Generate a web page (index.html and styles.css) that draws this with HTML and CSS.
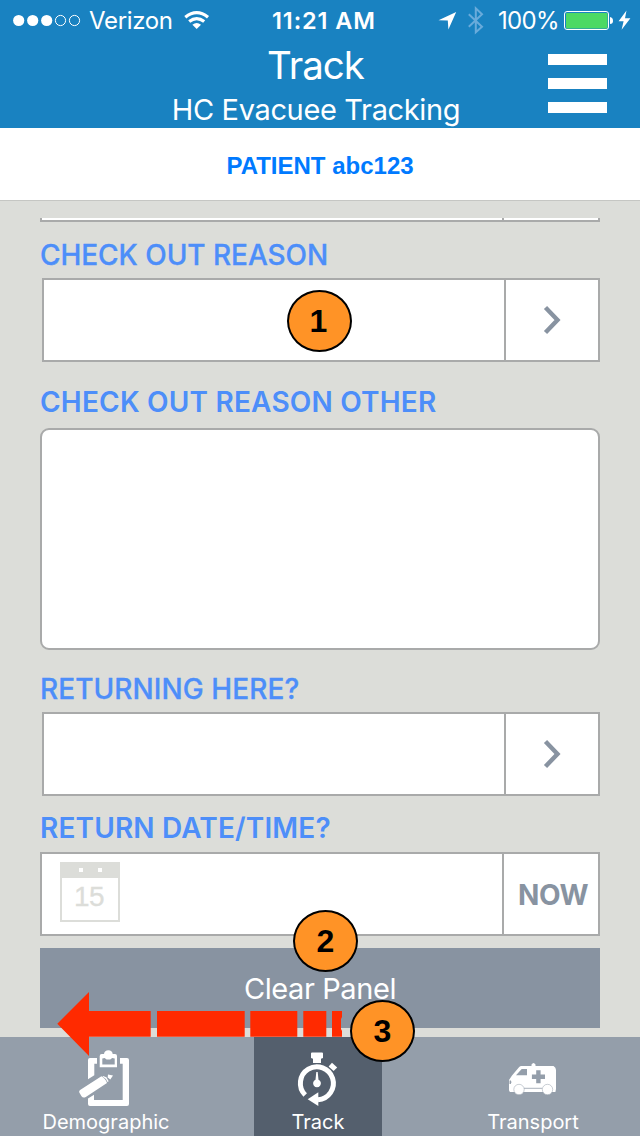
FILE: index.html
```html
<!DOCTYPE html>
<html lang="en">
<head>
<meta charset="utf-8">
<title>Track</title>
<link rel="stylesheet" href="styles.css">
</head>
<body>
<div class="screen">
  <header class="header">
    <div class="status">
      <svg class="signal" width="68" height="40" viewBox="13 0 68 40" fill="#fff">
        <circle cx="18.7" cy="20.5" r="5.6"/><circle cx="32.7" cy="20.5" r="5.6"/><circle cx="46.7" cy="20.5" r="5.6"/>
        <g fill="none" stroke="#fff" stroke-width="1"><circle cx="60.5" cy="20.5" r="5.1"/><circle cx="74.500" cy="20.5" r="5.1"/></g>
      </svg>
      <span class="carrier">Verizon</span>
      <svg class="wifi" width="26" height="40" viewBox="184 0 26 40" fill="none" stroke="#fff" stroke-width="3.200">
        <path d="M185.3 17.2Q196.7 8 208 17.2"/>
        <path d="M189.2 21.6Q196.7 15.6 204.2 21.6"/>
        <path d="M196.7 29l-4.300-4.200q4.300-3.500 8.600 0z" fill="#fff" stroke="none"/>
      </svg>
      <span class="time">11:21 AM</span>
      <svg class="radio" width="46" height="40" viewBox="438 0 46 40">
        <path d="M438.5 20.2L456.2 12 448.4 29.6 447.8 20.6z" fill="#fff"/>
        <path d="M468.8 14.3L482 26.8 475.8 32.3V8.3L482 14.3 468.8 26.8" fill="none" stroke="#69abdb" stroke-width="2"/>
      </svg>
      <span class="percent">100%</span>
      <svg class="battery" width="68" height="40" viewBox="563 0 68 40">
        <rect x="564.5" y="11.5" width="44" height="18" rx="2.5" fill="none" stroke="#fff"/>
        <rect x="566" y="13" width="41.5" height="15.5" rx="1" fill="#4cd964"/>
        <path d="M610 17q3 .5 3 3.7T610 24z" fill="#fff"/>
        <path d="M626.5 10.5L618.6 21.3H623.6L621.6 29.8 630.4 18.2H625z" fill="#fff"/>
      </svg>
    </div>
    <div class="heading">
      <h1 class="title">Track</h1>
      <p class="subtitle">HC Evacuee Tracking</p>
    </div>
    <div class="menu"><i></i><i></i><i></i></div>
  </header>

  <div class="patient"><span>PATIENT abc123</span></div>

  <main class="form">
    <div class="field field-cut"><div class="value"></div><div class="action"></div></div>
    <div class="label l1"><span>CHECK OUT REASON</span></div>
    <div class="field field-pick">
      <div class="value"><span class="badge b1">1</span></div>
      <div class="action"><svg width="20" height="32" viewBox="0 0 20 32"><path d="M4.500 3.500L16.500 16 4.500 28.500"/></svg></div>
    </div>
    <div class="label l2"><span>CHECK OUT REASON OTHER</span></div>
    <div class="textarea"></div>
    <div class="label l3"><span>RETURNING HERE?</span></div>
    <div class="field field-pick">
      <div class="value"></div>
      <div class="action"><svg width="20" height="32" viewBox="0 0 20 32"><path d="M4.500 3.500L16.500 16 4.500 28.500"/></svg></div>
    </div>
    <div class="label l4"><span>RETURN DATE/TIME?</span></div>
    <div class="field">
      <div class="value">
        <div class="calendar"><div class="rings"><i></i><i></i></div><div class="day">15</div></div>
      </div>
      <div class="action"><span class="now">NOW</span></div>
    </div>
    <div class="clear"><span>Clear Panel</span><span class="badge b2">2</span></div>
  </main>

  <nav class="tabs">
    <div class="tab">
      <svg width="56" height="64" viewBox="78 1046 56 64">
        <g fill="#fff">
          <path d="M88 1060q0-2 2-2h7v5.700h-2.700v11.500l-6.300 4zM120 1058h7q2 0 2 2v44q0 2-2 2H90q-2 0-2-2v-5.500l6-3.800v5.300h28.700v-36.300H120z"/>
          <path fill-rule="evenodd" d="M99.700 1056q0-2 2-2h2.300a4.400 4.400 0 0 1 8.700 0h2.300q2 0 2 2v11.300H99.700zM102.300 1058.500v6h12.400v-6l-2.500-.5-2 1.600h-3.600l-2-1.600z"/>
          <path d="M79.300 1092.600q-.6-1.600.8-2.500l21.300-13.900q4 2 5.600 6.700l-21.200 14q-2.600 1.600-4.300-.6z"/>
          <path d="M103 1076l3.400 1.300 2.300 4-1.200.8q-1.200-3.900-5-5.700zM108 1074.500l5 1-2.700 4-2.600-2z"/>
        </g>
      </svg>
      <span class="t1">Demographic</span>
    </div>
    <div class="tab active">
      <svg width="56" height="64" viewBox="290 1046 56 64">
        <path d="M305.200 1095A16.500 16.500 0 1 1 318 1099.800" fill="none" stroke="#fff" stroke-width="5"/>
        <g fill="#fff">
          <path d="M311 1053.500q0-1 1-1h10q1 0 1 1v4.500l-2 .7v4.300h-8v-4.300l-2-.7z"/>
          <path d="M332 1062.700l5.200 4.800-3.600 3.600-5-4.700z"/>
          <path d="M316.300 1072h1.400l.8 7.700a3.900 3.900 0 1 1-3 0z"/>
          <path d="M307.700 1099.300l10.600-7v13.700z"/>
        </g>
      </svg>
      <span class="t2">Track</span>
    </div>
    <div class="tab">
      <svg width="56" height="64" viewBox="505 1046 56 64">
        <path fill="#fff" d="M509 1080l3-4.500 7-8.300q1-1.200 2.500-1.200h10v-1.500q2-3 4 0v1.500h18q2.500 1.500 2.500 4v19l-.6 3H510q-1-1-1-2z"/>
        <path fill="#949eaa" d="M516 1075.300l5.700-6.300h5.300v6.300zM536.200 1070.300h4.400v4.300h4.400v4.300h-4.400v4.300h-4.400v-4.300h-4.300v-4.300h4.300zM509.500 1080.500h1.500q1 2-.3 3.500h-1.200z"/>
        <path d="M524 1088.300H542" stroke="#949eaa" stroke-width=".8"/>
        <g fill="#fff" stroke="#949eaa" stroke-width=".5"><circle cx="519" cy="1089.500" r="5.200"/><circle cx="547.500" cy="1089.500" r="5.200"/></g>
      </svg>
      <span class="t3">Transport</span>
    </div>
  </nav>

  <svg class="swipe" width="286" height="66" viewBox="57 991 286 66" fill="#ff2a00">
    <path d="M57.300 1023.700L89 992V1011H150.700V1036.700H89V1056z"/>
    <path d="M157 1011h87.700v25.700H157zM250.300 1011h47v25.700h-47zM303.300 1011h23v25.700h-23z"/>
    <path d="M332 1011h10v6l-1 2v10l1 2v5.700h-10z"/>
  </svg>
  <span class="badge b3">3</span>
</div>
</body>
</html>
```

FILE: styles.css
```css
* { box-sizing: border-box; }
body { margin: 0; background: #dcddd9; font-family: Inter, "Liberation Sans", sans-serif; }
h1, p { margin: 0; font-weight: 400; }
span { white-space: nowrap; }
svg { display: block; flex: none; }

.screen { position: relative; width: 640px; height: 1136px; overflow: hidden; display: flex; flex-direction: column; }

.header { position: relative; height: 128px; flex: none; background: #1982c1; color: #fff; }
.status { height: 40px; display: grid; grid-template-columns: 76px 95px 88px 166px 60px 65px 68px; padding-left: 13px; align-items: center; font-size: 24px; line-height: 40px; }
.status span { padding-top: 1px; height: 40px; }
.carrier { letter-spacing: -0.350px; }
.time { font-weight: 600; font-size: 23.500px; letter-spacing: 0.900px; }
.percent { letter-spacing: -0.700px; }
.heading { display: flex; flex-direction: column; align-items: center; padding-right: 8px; }
.title { font-size: 38.500px; line-height: 50px; font-weight: 400; letter-spacing: -1px; padding-right: 1px; }
.subtitle { font-size: 29px; line-height: 40px; font-weight: 400; letter-spacing: -0.350px; }
.menu { position: absolute; left: 548px; top: 54px; width: 59px; height: 59px; display: flex; flex-direction: column; justify-content: space-between; }
.menu i { height: 11px; background: #fff; }

.patient { height: 73px; flex: none; background: #fff; border-bottom: 1px solid #c5c6c3; display: flex; align-items: center; justify-content: center; padding-top: 4px; color: #007aff; font: bold 24px "Liberation Sans", Arial, sans-serif; }

.form { flex: 1; padding: 17px 40px 0; }
.field { height: 84px; display: flex; background: #fff; border: 2px solid #a9aaaa; }
.value { flex: 1; position: relative; display: flex; align-items: center; }
.action { width: 96px; border-left: 2px solid #a9aaaa; display: flex; align-items: center; justify-content: center; }
.field-cut { height: 4px; border-top: 0; }
.field-pick { margin-left: 2px; }
.field-pick .action { width: 94px; padding-right: 3px; }
.action path { fill: none; stroke: #8893a1; stroke-width: 4.400; }
.now { font-size: 28px; font-weight: 700; color: #8893a1; padding: 1px 0 0 4px; letter-spacing: -0.400px; }
.label { display: flex; align-items: center; color: #4d8ef9; font-size: 28px; line-height: 34px; }
.l1 { height: 56px; padding-top: 10px; font-weight: 500; letter-spacing: -0.050px; -webkit-text-stroke: 0.300px #4d8ef9; }
.l2 { height: 66px; padding-top: 14px; font-weight: 600; letter-spacing: 0.200px; }
.l3 { height: 62px; padding-top: 16px; font-weight: 500; letter-spacing: 0.080px; -webkit-text-stroke: 0.300px #4d8ef9; }
.l4 { height: 56px; padding-top: 8px; font-weight: 600; letter-spacing: 0.150px; }
.textarea { height: 222px; background: #fff; border: 2px solid #a9aaaa; border-radius: 9px; }

.calendar { width: 60px; height: 60px; margin: -4px 0 0 18px; border: 2px solid #dcddd9; color: #dcddd9; }
.rings { height: 14px; background: #dcddd9; display: flex; justify-content: center; gap: 15px; padding: 4px 0 0 1px; }
.rings i { width: 4px; height: 4px; background: #fff; }
.day { text-align: center; font: 28px/38px "Liberation Sans", Arial, sans-serif; letter-spacing: -0.500px; padding-right: 2px; -webkit-text-stroke: 0.300px #dcddd9; }

.clear { position: relative; height: 80px; margin-top: 12px; background: #8893a1; color: #fff; display: flex; align-items: center; justify-content: center; font-size: 29px; font-weight: 400; letter-spacing: -0.400px; }

.tabs { height: 99px; flex: none; background: #949eaa; display: grid; grid-template-columns: 254px 128px 258px; color: #fff; font-size: 20px; }
.tab { display: flex; flex-direction: column; align-items: center; padding-top: 9px; line-height: 24px; }
.tab:first-child { padding-right: 42px; }
.tab:last-child { padding-left: 44px; }
.active { background: #545f6d; }

.badge { position: absolute; width: 65px; height: 62px; border: 2px solid #000; border-radius: 50%; background: #ff9326; color: #000; text-align: center; letter-spacing: 0; font: bold 32px/58px "Liberation Sans", Arial, sans-serif; }
.b1 { left: 243px; top: 10px; padding-right: 2px; }
.b2 { left: 253px; top: -38px; }
.b3 { left: 350px; top: 1000px; }
.swipe { position: absolute; left: 57px; top: 991px; }
```
